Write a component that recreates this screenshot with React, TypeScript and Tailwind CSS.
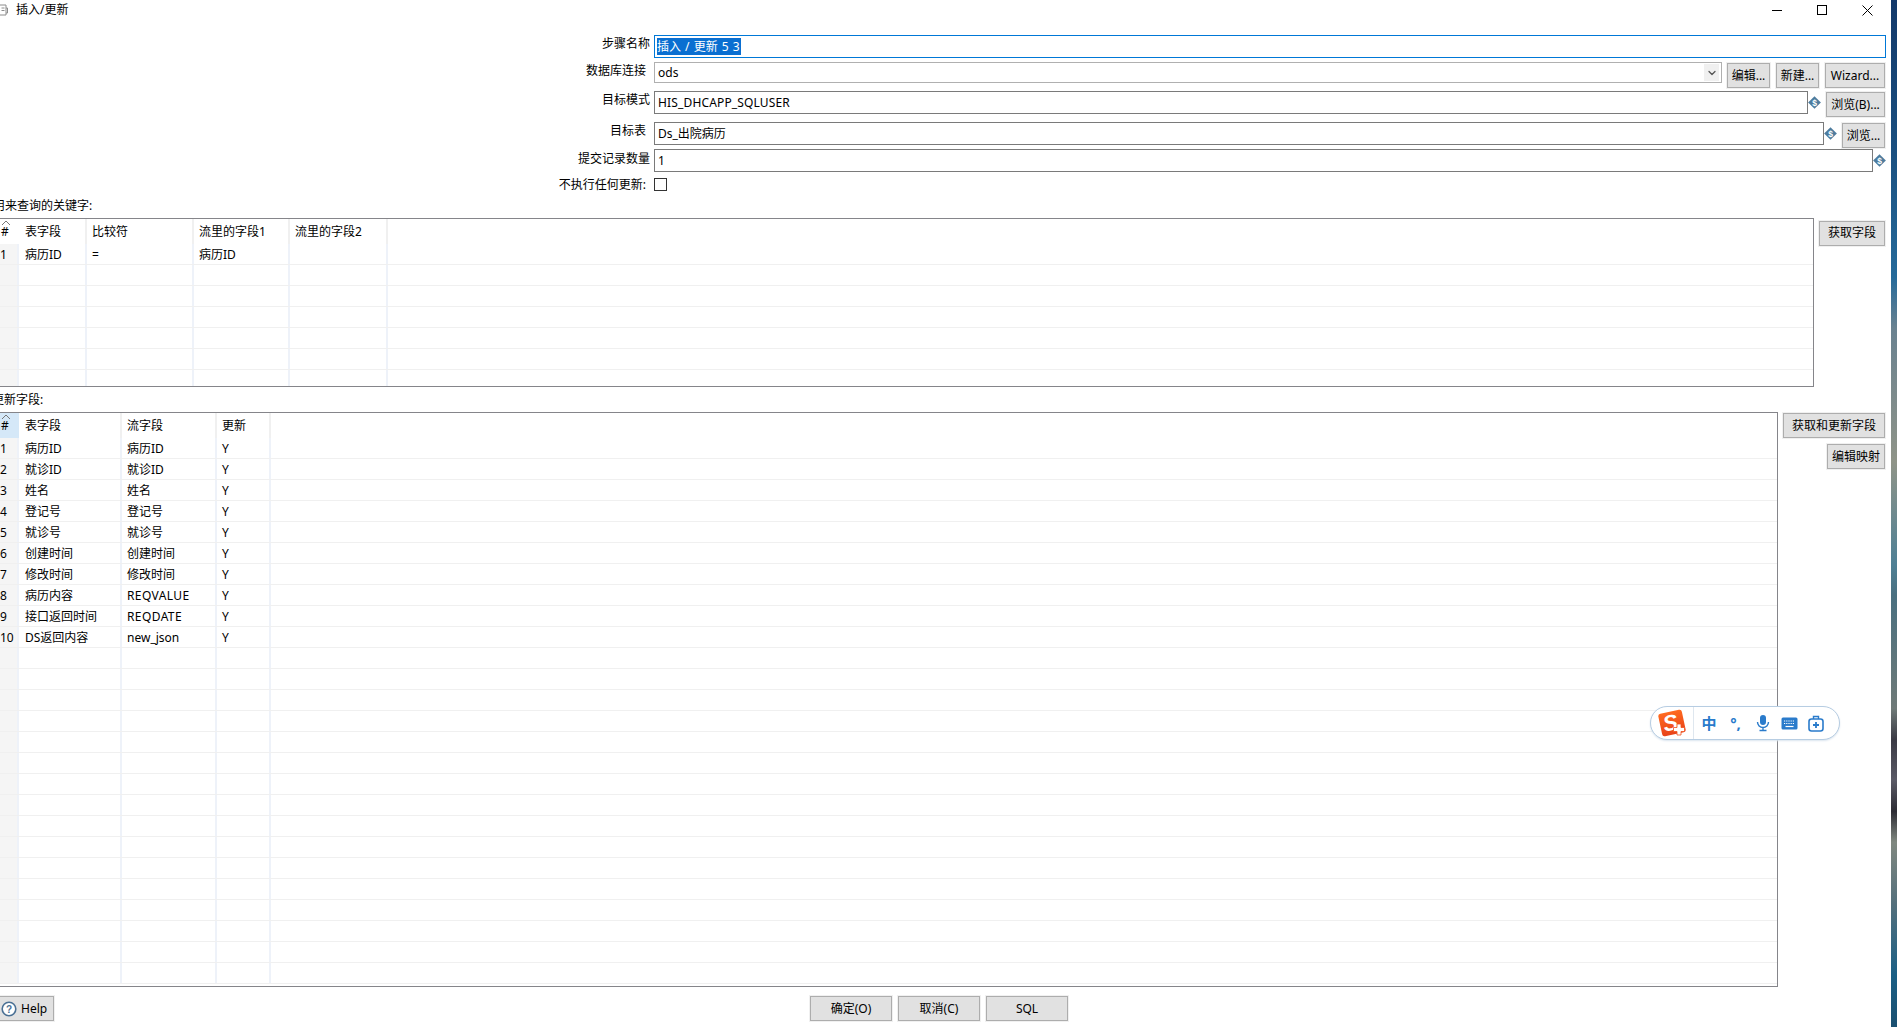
import { ChevronDown } from "lucide-react";
import { ReactNode } from "react";

const font = "font-['Noto_Sans','Noto_Sans_CJK_SC',sans-serif]";

const Btn = ({ label, className = "" }: { label: ReactNode; className?: string }) => (
  <button
    type="button"
    className={`h-[25px] shrink-0 border border-[#adadad] bg-[#e1e1e1] text-[12px] leading-none text-black shadow-[0_0_0_1px_#f0f0f0] ${className}`}
  >
    {label}
  </button>
);

const VarIcon = () => (
  <svg viewBox="0 0 13 13" className="h-[13px] w-[13px] shrink-0 self-center">
    <rect x="2" y="2" width="9" height="9" transform="rotate(45 6.5 6.5)" fill="#4d7c9e" />
    <text x="6.5" y="9.5" textAnchor="middle" fontSize="8.5" fontWeight="700" fill="#fff" fontFamily="Liberation Sans, sans-serif">
      $
    </text>
  </svg>
);

const Label = ({ text, pr = "pr-[4px]", mt }: { text: string; pr?: string; mt: string }) => (
  <div className={`h-[20px] w-[654px] shrink-0 text-right text-[12px] leading-[20px] ${pr} ${mt}`}>{text}</div>
);

const Field = ({ value, className = "" }: { value: string; className?: string }) => (
  <div className={`flex h-[23px] flex-1 items-center border border-[#7a7a7a] pl-[3px] text-[12px] leading-none ${className}`}>
    {value}
  </div>
);

interface GridProps {
  widths: number[];
  headers: string[];
  rows: string[][];
  rowCount: number;
  activeHeader?: boolean;
}

const Grid = ({ widths, headers, rows, rowCount, activeHeader }: GridProps) => (
  <div className="min-w-0 flex-1 overflow-hidden border-t border-r border-b border-[#85858a] text-[12px]">
    <div className="flex h-[25px]">
      <div className={`relative w-[19px] shrink-0 pl-[1px] leading-[25px] ${activeHeader ? "bg-[#d5e8f8]" : ""}`}>
        #
        <svg viewBox="0 0 10 6" className="absolute top-[1px] left-[1px] h-[6px] w-[10px]">
          <path d="M1 5 5 1l4 4" fill="none" stroke="#777" strokeWidth="1" />
        </svg>
      </div>
      {headers.map((h, i) => (
        <div
          key={h}
          style={{ width: widths[i] }}
          className={`shrink-0 border-r-2 border-r-[#f0f0f0] leading-[26px] ${i === 0 ? "pl-[6px]" : "pl-[5px]"}`}
        >
          {h}
        </div>
      ))}
    </div>
    {Array.from({ length: rowCount }).map((_, r) => (
      <div key={r} className="flex h-[21px] border-b border-[#f0f0f0]">
        <div className="w-[19px] shrink-0 border-r-2 border-[#eef2f9] bg-[#f5f5f5] leading-[21px]">
          {rows[r] ? r + 1 : ""}
        </div>
        {headers.map((h, i) => (
          <div
            key={h}
            style={{ width: widths[i] }}
            className={`shrink-0 border-r-2 border-[#eef2f9] leading-[21px] whitespace-nowrap ${i === 0 ? "pl-[6px]" : "pl-[5px]"} ${
              /^[A-Z]+$/.test(rows[r]?.[i] ?? "") && (rows[r]?.[i] ?? "").length > 1 ? "tracking-[0.4px]" : ""
            }`}
          >
            {rows[r]?.[i] ?? ""}
          </div>
        ))}
      </div>
    ))}
  </div>
);

const keyRows = [["病历ID", "=", "病历ID", ""]];

const updateRows = [
  ["病历ID", "病历ID", "Y"],
  ["就诊ID", "就诊ID", "Y"],
  ["姓名", "姓名", "Y"],
  ["登记号", "登记号", "Y"],
  ["就诊号", "就诊号", "Y"],
  ["创建时间", "创建时间", "Y"],
  ["修改时间", "修改时间", "Y"],
  ["病历内容", "REQVALUE", "Y"],
  ["接口返回时间", "REQDATE", "Y"],
  ["DS返回内容", "new_json", "Y"],
];

const ImeBar = () => (
  <div className="absolute top-[706px] left-[1650px] flex h-[34px] w-[190px] items-center rounded-full border border-[#b7cde2] bg-white shadow-[0_1px_2px_#dbe5ef]">
    <div className="flex h-full w-[43px] shrink-0 items-center justify-center border-r border-[#dfe7ef]">
      <svg viewBox="0 0 28 28" className="h-[28px] w-[28px]">
        <defs>
          <linearGradient id="ime-logo" x1="0" y1="0" x2="0" y2="1">
            <stop offset="0" stopColor="#ff6a1f" />
            <stop offset="1" stopColor="#e8431a" />
          </linearGradient>
        </defs>
        <g transform="rotate(-12 14 14)">
          <rect x="2" y="2.500" width="24" height="23" rx="2.500" fill="url(#ime-logo)" />
          <text x="12.500" y="21" textAnchor="middle" fontSize="22" fontWeight="700" fontStyle="italic" fill="#fff" fontFamily="Liberation Sans, sans-serif">
            S
          </text>
        </g>
        <path d="M19 15h4v3.500h3.500v4H23V26h-4v-3.500h-3.500v-4H19z" fill="#fff" stroke="#f0501c" strokeWidth="0.800" />
      </svg>
    </div>
    <div className="flex flex-1 items-center pl-[1px] text-[#2a7bcb]">
      <span className="w-[28px] text-center text-[15px] leading-none font-bold">中</span>
      <span className="w-[25px] text-center text-[15px] leading-none font-bold">°,</span>
      <svg viewBox="0 0 16 18" className="ml-[7px] h-[18px] w-[16px]">
        <rect x="5" y="1" width="6" height="10" rx="3" fill="currentColor" />
        <path d="M2.500 8a5.500 5.500 0 0 0 11 0M8 13.500V16M4.500 16.500h7" fill="none" stroke="currentColor" strokeWidth="1.400" />
      </svg>
      <svg viewBox="0 0 17 13" className="ml-[10px] h-[13px] w-[17px]">
        <rect x="0.500" y="0.500" width="16" height="12" rx="1.500" fill="currentColor" />
        <path d="M3 4h11M3 6.500h11" stroke="#fff" strokeWidth="1.200" strokeDasharray="1.200 1" />
        <path d="M4.500 9.500h8" stroke="#fff" strokeWidth="1.200" />
      </svg>
      <svg viewBox="0 0 16 17" className="ml-[10px] h-[17px] w-[16px]">
        <rect x="1" y="4" width="14" height="12" rx="2.500" fill="none" stroke="currentColor" strokeWidth="1.600" />
        <path d="M5.500 4V1.500h5V4" fill="none" stroke="currentColor" strokeWidth="1.400" />
        <path d="M8 7v6M5 10h6" stroke="currentColor" strokeWidth="1.800" />
      </svg>
    </div>
  </div>
);

export default function App() {
  return (
    <div className={`relative flex h-screen w-full overflow-hidden bg-white text-black ${font}`}>
      <div className="flex w-[1891px] shrink-0 flex-col overflow-hidden bg-white pr-[6px]">
        {/* title bar */}
        <div className="-mr-[6px] flex h-[20px] shrink-0 items-center">
          <svg viewBox="0 0 8 12" className="h-[12px] w-[8px] text-[#8c8c8c]">
            <path d="M0 1h6v10H0M6 4h1.500v5H6M1.500 4h3M1.500 6.500h3" fill="none" stroke="currentColor" />
          </svg>
          <span className="ml-[8px] text-[12px] leading-none">插入/更新</span>
          <div className="mr-[18px] ml-auto flex items-center gap-[35px]">
            <svg viewBox="0 0 10 10" className="h-[10px] w-[10px]">
              <path d="M0 5.500h10" stroke="#000" strokeWidth="1" />
            </svg>
            <svg viewBox="0 0 10 10" className="h-[10px] w-[10px]">
              <rect x="0.500" y="0.500" width="9" height="9" fill="none" stroke="#000" strokeWidth="1" />
            </svg>
            <svg viewBox="0 0 11 11" className="h-[11px] w-[11px]">
              <path d="M0.500 0.500l10 10M10.500 0.500l-10 10" stroke="#000" strokeWidth="1" />
            </svg>
          </div>
        </div>

        {/* form */}
        <div className="mt-[15px] -mr-[1px] flex h-[23px]">
          <Label text="步骤名称" mt="-mt-[1px]" />
          <div className="flex flex-1 items-center border border-[#0078d7] pl-[2px] text-[12px] leading-none">
            <span className="flex h-[17px] items-center bg-[#0a6fd1] pr-px text-white [word-spacing:1px]">插入 / 更新 5 3</span>
          </div>
        </div>
        <div className="mt-[4px] flex h-[26px]">
          <Label text="数据库连接" pr="pr-[8px]" mt="-mt-[1px]" />
          <div className="flex h-[21px] flex-1 items-center justify-between border border-[#b0b0b0] pr-[2px] pl-[3px] text-[12px] leading-none">
            ods
            <span className="flex h-[17px] w-[15px] items-center justify-center bg-[#f0f0f0]">
              <ChevronDown className="h-[12px] w-[12px] text-[#555]" strokeWidth={2.5} />
            </span>
          </div>
          <Btn label="编辑..." className="mt-[1px] ml-[5px] w-[43px]" />
          <Btn label="新建..." className="mt-[1px] ml-[6px] w-[43px]" />
          <Btn label="Wizard..." className="mt-[1px] ml-[6px] w-[60px]" />
        </div>
        <div className="mt-[3px] flex h-[26px]">
          <Label text="目标模式" mt="-mt-[1px]" />
          <div className="flex h-[23px] flex-1">
            <Field value="HIS_DHCAPP_SQLUSER" className="tracking-[0.15px]" />
            <VarIcon />
          </div>
          <Btn label="浏览(B)..." className="mt-[1px] ml-[5px] w-[59px]" />
        </div>
        <div className="mt-[5px] flex h-[26px]">
          <Label text="目标表" pr="pr-[8px]" mt="-mt-[1px]" />
          <div className="flex h-[23px] flex-1">
            <Field value="Ds_出院病历" />
            <VarIcon />
          </div>
          <Btn label="浏览..." className="mt-[1px] ml-[5px] w-[43px]" />
        </div>
        <div className="mt-[1px] -mr-[1px] flex h-[23px]">
          <Label text="提交记录数量" mt="mt-0" />
          <Field value="1" />
          <VarIcon />
        </div>
        <div className="mt-[6px] flex h-[13px]">
          <Label text="不执行任何更新:" pr="pr-[8px]" mt="-mt-[3px]" />
          <div className="h-[13px] w-[13px] border border-[#333]" />
        </div>

        {/* key table */}
        <div className="mt-[5px] -ml-[7px] h-[20px] shrink-0 text-[12px] leading-[20px]">用来查询的关键字:</div>
        <div className="mt-[2px] flex h-[169px] shrink-0">
          <Grid
            widths={[68, 107, 96, 98]}
            headers={["表字段", "比较符", "流里的字段1", "流里的字段2"]}
            rows={keyRows}
            rowCount={7}
          />
          <div className="ml-[5px] w-[66px] shrink-0 pt-[1px]">
            <Btn label="获取字段" className="w-[66px]" />
          </div>
        </div>

        {/* update table */}
        <div className="mt-[3px] -ml-[8px] h-[20px] shrink-0 text-[12px] leading-[20px]">更新字段:</div>
        <div className="mt-[2px] flex h-[575px] shrink-0">
          <Grid
            widths={[103, 95, 54]}
            headers={["表字段", "流字段", "更新"]}
            rows={updateRows}
            rowCount={26}
            activeHeader
          />
          <div className="ml-[5px] flex w-[102px] shrink-0 flex-col items-end gap-[6px] pt-[1px]">
            <Btn label="获取和更新字段" className="w-[102px]" />
            <Btn label="编辑映射" className="w-[58px]" />
          </div>
        </div>

        {/* bottom buttons */}
        <div className="mt-[9px] flex h-[25px] shrink-0">
          <Btn
            label={
              <span className="flex items-center pl-[1px]">
                <svg viewBox="0 0 16 16" className="h-[16px] w-[16px]">
                  <circle cx="8" cy="8" r="6.800" fill="#fff" stroke="#4a7094" strokeWidth="1.600" />
                  <text x="8" y="11.500" textAnchor="middle" fontSize="10" fontWeight="700" fill="#4a7094" fontFamily="Liberation Sans, sans-serif">
                    ?
                  </text>
                </svg>
                <span className="ml-[4px]">Help</span>
              </span>
            }
            className="w-[54px] border-l-0"
          />
          <Btn label="确定(O)" className="ml-[756px] w-[82px]" />
          <Btn label="取消(C)" className="ml-[6px] w-[82px]" />
          <Btn label="SQL" className="ml-[6px] w-[82px]" />
        </div>
      </div>

      {/* desktop wallpaper edge */}
      <div className="w-[6px] shrink-0 bg-[linear-gradient(180deg,#13396a_0%,#1a5080_15%,#256a9a_27%,#6a8290_32%,#8f9488_45%,#4f8095_55%,#4a7080_58%,#6f7a78_69%,#3a3a44_72%,#5a5a66_76%,#2c2c34_79%,#808880_82%,#55707c_88%,#1a5f85_95%,#1a4f70_100%)]" />

      <ImeBar />
    </div>
  );
}
